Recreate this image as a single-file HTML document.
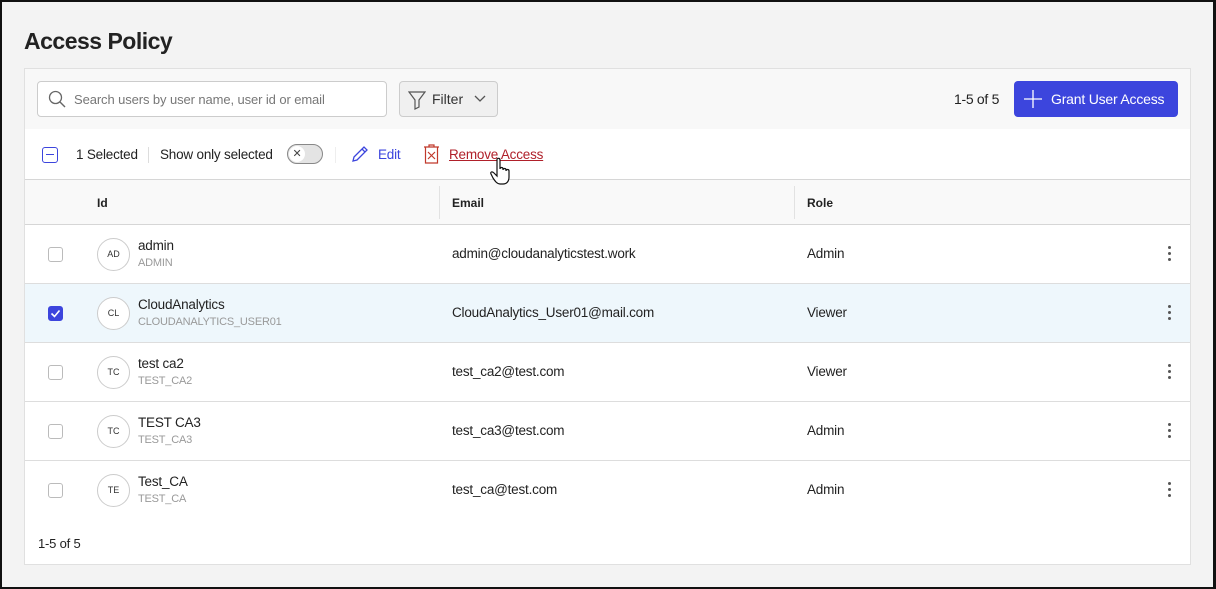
<!DOCTYPE html>
<html><head><meta charset="utf-8"><style>
*{box-sizing:border-box;margin:0;padding:0}
body{width:1216px;height:589px;background:#f3f3f3;font-family:"Liberation Sans",sans-serif;color:#222;position:relative;overflow:hidden}
.frame{position:absolute;left:0;top:0;width:1216px;height:589px;border:2px solid #111;border-right-width:3px;z-index:5}
h1{position:absolute;left:24px;top:28px;font-size:23px;font-weight:600;color:#222;letter-spacing:-0.5px}
.card{position:absolute;left:24px;top:68px;width:1167px;height:497px;background:#fff;border:1px solid #e0e0e0}
.tb{position:absolute;left:0;top:0;width:100%;height:60px;background:#f8f8f8}
.search{position:absolute;left:12px;top:12px;width:350px;height:36px;border:1px solid #ccc;border-radius:4px;background:#fff;font-size:13px;color:#777;padding:10px 0 0 36px;letter-spacing:-0.1px}
.filter{position:absolute;left:374px;top:12px;width:99px;height:36px;border:1px solid #ccc;border-radius:4px;background:#f0f0f0;font-size:14px;color:#333;padding:9px 0 0 32px}
.cnt{position:absolute;left:929px;top:22px;font-size:14px;letter-spacing:-0.3px}
.grant{position:absolute;left:989px;top:12px;width:164px;height:36px;background:#3c45dd;border-radius:4px;color:#fff;font-size:14px;padding:10px 0 0 37px;letter-spacing:-0.2px}
.act{position:absolute;left:0;top:60px;width:100%;height:51px;border-bottom:1px solid #d6d6d6;font-size:13.5px;z-index:3;letter-spacing:-0.2px}
.act span{position:absolute;top:18px}
.hdr{position:absolute;left:0;top:111px;width:100%;height:45px;background:#f9f9f9;border-bottom:1px solid #d6d6d6;font-size:12px;font-weight:bold}
.hdr span{position:absolute;top:16px}
.vs{position:absolute;top:6px;width:1px;height:33px;background:#e2e2e2}
.row{position:absolute;left:0;width:100%;height:59px;border-bottom:1px solid #ddd;font-size:13.5px;letter-spacing:-0.2px}
.row .cb{position:absolute;left:23px;top:22px;width:15px;height:15px;border:1px solid #bbb;border-radius:3px;background:#fff}
.av{position:absolute;left:72px;top:13px;width:33px;height:33px;border:1px solid #ccc;border-radius:50%;font-size:9px;text-align:center;line-height:31px;color:#333;letter-spacing:0}
.nm{position:absolute;left:113px;top:13px;font-size:13.5px}
.sub{position:absolute;left:113px;top:32px;font-size:11px;color:#999;letter-spacing:-0.2px}
.em{position:absolute;left:427px;top:21px}
.rl{position:absolute;left:782px;top:21px}
.dots{position:absolute;left:1143px;top:21px;width:4px}
.dots i{display:block;width:3px;height:3px;background:#555;border-radius:50%;margin-bottom:3px}
.foot{position:absolute;left:13px;top:467px;font-size:13px;letter-spacing:-0.2px}
</style></head><body>
<div class="frame"></div>
<h1>Access Policy</h1>
<div class="card">
 <div class="tb">
  <div class="search"><svg style="position:absolute;left:10px;top:8px" width="18" height="18" viewBox="0 0 18 18"><circle cx="7.5" cy="7.5" r="6" fill="none" stroke="#666" stroke-width="1.3"/><path d="M12 12l5 5" stroke="#666" stroke-width="1.4"/></svg>Search users by user name, user id or email</div>
  <div class="filter"><svg style="position:absolute;left:8px;top:8px" width="18" height="20" viewBox="0 0 18 20"><path d="M1 2h16l-6 8v7l-4 2v-9z" fill="none" stroke="#555" stroke-width="1.2"/></svg>Filter<svg style="position:absolute;left:74px;top:13px" width="12" height="8" viewBox="0 0 12 8"><path d="M1 1l5 5 5-5" fill="none" stroke="#555" stroke-width="1.3"/></svg></div>
  <div class="cnt">1-5 of 5</div>
  <div class="grant"><svg style="position:absolute;left:10px;top:9px" width="18" height="18" viewBox="0 0 18 18"><path d="M9 0v18M0 9h18" stroke="#fff" stroke-width="1.3"/></svg>Grant User Access</div>
 </div>
 <div class="act">
  <div style="position:absolute;left:17px;top:18px;width:16px;height:16px;border:1.3px solid #3c45dd;border-radius:3px"><div style="position:absolute;left:3px;top:6px;width:8px;height:1.3px;background:#3c45dd"></div></div>
  <span style="left:51px">1 Selected</span>
  <div style="position:absolute;left:123px;top:18px;width:1px;height:16px;background:#ddd"></div>
  <span style="left:135px">Show only selected</span>
  <div style="position:absolute;left:262px;top:15px;width:36px;height:20px;border:1px solid #888;border-radius:10px;background:#e4e4e4"><div style="position:absolute;left:1px;top:1px;width:16px;height:16px;border-radius:50%;background:#fff;font-size:11px;line-height:16px;text-align:center;color:#444">✕</div></div>
  <div style="position:absolute;left:310px;top:18px;width:1px;height:16px;background:#eee"></div>
  <svg style="position:absolute;left:326px;top:16px" width="18" height="18" viewBox="0 0 18 18"><path d="M2 16l1-4L13 2l3 3L6 15z M11 4l3 3" fill="none" stroke="#3c45dd" stroke-width="1.3"/></svg>
  <span style="left:353px;color:#3c45dd">Edit</span>
  <svg style="position:absolute;left:398px;top:15px" width="17" height="20" viewBox="0 0 17 20"><path d="M1 3h15M6 3V1h5v2M2.5 3v16h12V3M5 8l7 7M12 8l-7 7" fill="none" stroke="#c0392b" stroke-width="1.2"/></svg>
  <span style="left:424px;color:#b0202a;text-decoration:underline">Remove Access</span>
  <svg style="position:absolute;left:465px;top:28px" width="24" height="30" viewBox="0 0 24 30"><path d="M7 2c1-1 3-1 3 1v9c0-2 3-2 3 0v1c0-2 3-2 3 0v1c0-2 3-2 3 0v6c0 4-2 7-6 7h-3c-3 0-5-3-7-6l-2-4c-1-2 1-3 3-1l3 3V3z" fill="#fff" stroke="#111" stroke-width="1.2"/></svg>
 </div>
 <div class="hdr"><span style="left:72px">Id</span><div class="vs" style="left:414px"></div><span style="left:427px">Email</span><div class="vs" style="left:769px"></div><span style="left:782px">Role</span></div>
 <div class="row" style="top:156px"><div class="cb"></div><div class="av">AD</div><div class="nm">admin</div><div class="sub">ADMIN</div><div class="em">admin@cloudanalyticstest.work</div><div class="rl">Admin</div><div class="dots"><i></i><i></i><i></i></div></div>
 <div class="row" style="top:215px;background:#eef7fc"><div class="cb" style="background:#3c45dd;border-color:#3c45dd"><svg width="13" height="13" viewBox="0 0 13 13"><path d="M2.5 6.5l3 3 5-6" fill="none" stroke="#fff" stroke-width="1.6"/></svg></div><div class="av" style="background:#fff">CL</div><div class="nm">CloudAnalytics</div><div class="sub">CLOUDANALYTICS_USER01</div><div class="em">CloudAnalytics_User01@mail.com</div><div class="rl">Viewer</div><div class="dots"><i></i><i></i><i></i></div></div>
 <div class="row" style="top:274px"><div class="cb"></div><div class="av">TC</div><div class="nm">test ca2</div><div class="sub">TEST_CA2</div><div class="em">test_ca2@test.com</div><div class="rl">Viewer</div><div class="dots"><i></i><i></i><i></i></div></div>
 <div class="row" style="top:333px"><div class="cb"></div><div class="av">TC</div><div class="nm">TEST CA3</div><div class="sub">TEST_CA3</div><div class="em">test_ca3@test.com</div><div class="rl">Admin</div><div class="dots"><i></i><i></i><i></i></div></div>
 <div class="row" style="top:392px;border-bottom:none"><div class="cb"></div><div class="av">TE</div><div class="nm">Test_CA</div><div class="sub">TEST_CA</div><div class="em">test_ca@test.com</div><div class="rl">Admin</div><div class="dots"><i></i><i></i><i></i></div></div>
 <div class="foot">1-5 of 5</div>
</div>
</body></html>
